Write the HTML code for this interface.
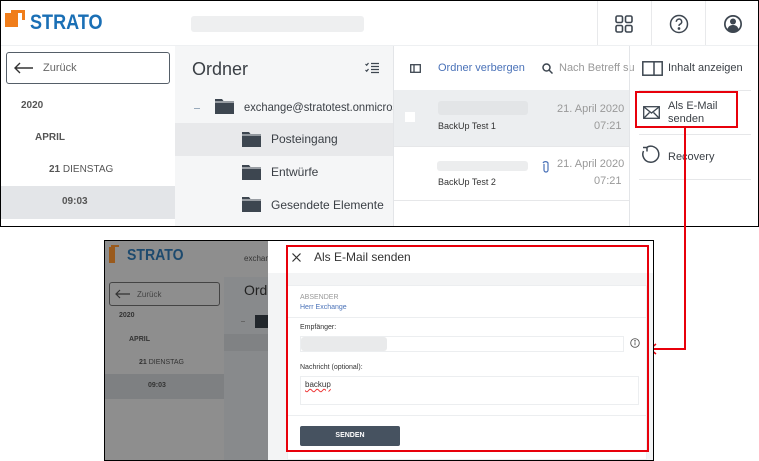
<!DOCTYPE html>
<html><head><meta charset="utf-8"><style>
*{box-sizing:border-box;margin:0;padding:0}
body{width:759px;height:461px;background:#fff;position:relative;overflow:hidden;font-family:"Liberation Sans",sans-serif;color:#333}
.a{position:absolute}
.t{position:absolute;white-space:nowrap}
.blur{position:absolute;background:#e6e7e9;border-radius:3px}
</style></head><body>
<!-- TOP SCREENSHOT -->
<div class="a" style="left:0;top:0;width:759px;height:227px;border:1px solid #000;overflow:hidden;background:#fff">
  <div class="a" style="left:4px;top:12px;width:13px;height:14px;background:#f07d1a"></div>
  <div class="a" style="left:10px;top:9px;width:14px;height:3px;background:#f07d1a"></div>
  <div class="a" style="left:21px;top:9px;width:3px;height:10px;background:#f07d1a"></div>
  <div class="t" style="left:29px;top:10px;font-size:21px;font-weight:bold;color:#1a6fb5;transform:scaleX(0.86);transform-origin:left">STRATO</div>
  <div class="blur" style="left:190px;top:15px;width:173px;height:16px;background:#eeeff0"></div>
  <div class="a" style="left:596px;top:0;width:1px;height:44px;background:#e8e9eb"></div>
  <div class="a" style="left:650px;top:0;width:1px;height:44px;background:#e8e9eb"></div>
  <div class="a" style="left:704px;top:0;width:1px;height:44px;background:#e8e9eb"></div>
  <div class="a" style="left:0;top:44px;width:759px;height:1px;background:#eef0f2"></div>
  <svg class="a" style="left:614px;top:14px" width="18" height="18" viewBox="0 0 18 18" fill="none" stroke="#3d4650" stroke-width="1.6"><rect x="1" y="1" width="6.5" height="6.5" rx="1.5"/><rect x="10.5" y="1" width="6.5" height="6.5" rx="1.5"/><rect x="1" y="10.5" width="6.5" height="6.5" rx="1.5"/><rect x="10.5" y="10.5" width="6.5" height="6.5" rx="1.5"/></svg>
  <svg class="a" style="left:668px;top:13px" width="20" height="20" viewBox="0 0 20 20" fill="none" stroke="#3d4650" stroke-width="1.5"><circle cx="10" cy="10" r="8.5"/><path d="M7.3 7.8a2.7 2.7 0 1 1 3.6 2.5c-.7.3-.9.8-.9 1.6"/><circle cx="10" cy="14.5" r=".6" fill="#3d4650"/></svg>
  <svg class="a" style="left:722px;top:13px" width="20" height="20" viewBox="0 0 20 20"><circle cx="10" cy="10" r="9" fill="#3d4650"/><circle cx="10" cy="10" r="7.3" fill="#fff"/><circle cx="10" cy="7.5" r="3" fill="#3d4650"/><path d="M4.5 15c1-3 3-4 5.5-4s4.5 1 5.5 4a7 7 0 0 1-11 0z" fill="#3d4650"/></svg>
  <div class="a" style="left:5px;top:51px;width:164px;height:32px;border:1.5px solid #555e68;border-radius:3px"></div>
  <svg class="a" style="left:13px;top:61px" width="20" height="12" viewBox="0 0 20 12" fill="none" stroke="#333" stroke-width="1.4"><path d="M19 6H1M6 1L1 6l5 5"/></svg>
  <div class="t" style="left:42px;top:61px;font-size:11px;color:#666">Zurück</div>
  <div class="t" style="left:20px;top:99px;font-size:10px;font-weight:bold;color:#555">2020</div>
  <div class="t" style="left:34px;top:131px;font-size:10px;font-weight:bold;color:#555">APRIL</div>
  <div class="t" style="left:48px;top:163px;font-size:10px;color:#555"><b>21</b> DIENSTAG</div>
  <div class="a" style="left:0;top:185px;width:174px;height:33px;background:#e3e5e8"></div>
  <div class="t" style="left:61px;top:195px;font-size:10px;font-weight:bold;color:#555">09:03</div>
  <div class="a" style="left:174px;top:45px;width:218px;height:182px;background:#f5f6f7"></div>
  <div class="t" style="left:191px;top:58px;font-size:18px;color:#3a3f45">Ordner</div>
  <svg class="a" style="left:364px;top:61px" width="15" height="12" viewBox="0 0 15 12" fill="none" stroke="#3d4650" stroke-width="1.2"><path d="M0.5 2l1.2 1.2L3.5 1M0.5 8l1.2 1.2L3.5 7M6 1.5h8M6 4.5h8M6 7.5h8M6 10.5h8"/></svg>
  <div class="a" style="left:193px;top:107px;width:6px;height:1px;background:#9ab"></div>
  <svg class="a" style="left:214px;top:97px" width="19" height="16" viewBox="0 0 19 16"><path d="M0 1h7l1.5 2H19v13H0z" fill="#3d4650"/><path d="M0 4h19" stroke="#f5f6f7" stroke-width="1"/></svg>
  <div class="t" style="left:243px;top:99px;font-size:12px;color:#3a3f45;transform:scaleX(0.93);transform-origin:left">exchange@stratotest.onmicrosoft</div>
  <div class="a" style="left:174px;top:122px;width:218px;height:33px;background:#e8e9eb"></div>
  <svg class="a" style="left:241px;top:130px" width="19" height="16" viewBox="0 0 19 16"><path d="M0 1h7l1.5 2H19v13H0z" fill="#3d4650"/><path d="M0 4h19" stroke="#e8e9eb"/></svg>
  <div class="t" style="left:270px;top:131px;font-size:12px;color:#3a3f45">Posteingang</div>
  <svg class="a" style="left:241px;top:163px" width="19" height="16" viewBox="0 0 19 16"><path d="M0 1h7l1.5 2H19v13H0z" fill="#3d4650"/><path d="M0 4h19" stroke="#f5f6f7"/></svg>
  <div class="t" style="left:270px;top:164px;font-size:12px;color:#3a3f45">Entwürfe</div>
  <svg class="a" style="left:241px;top:195px" width="19" height="16" viewBox="0 0 19 16"><path d="M0 1h7l1.5 2H19v13H0z" fill="#3d4650"/><path d="M0 4h19" stroke="#f5f6f7"/></svg>
  <div class="t" style="left:270px;top:197px;font-size:12px;color:#3a3f45">Gesendete Elemente</div>
  <div class="a" style="left:392px;top:45px;width:1px;height:182px;background:#e3e5e8"></div>
  <svg class="a" style="left:409px;top:63px" width="11" height="9" viewBox="0 0 11 9" fill="none" stroke="#3d4650" stroke-width="1.3"><rect x="0.7" y="0.7" width="9.6" height="7.6"/><path d="M4 1v7"/></svg>
  <div class="t" style="left:437px;top:61px;font-size:11px;color:#4a72b8">Ordner verbergen</div>
  <svg class="a" style="left:541px;top:62px" width="11" height="11" viewBox="0 0 11 11" fill="none" stroke="#3d4650" stroke-width="1.5"><circle cx="4.5" cy="4.5" r="3.5"/><path d="M7 7l3.5 3.5"/></svg>
  <div class="t" style="left:558px;top:61px;font-size:11px;color:#999">Nach Betreff su</div>
  <div class="a" style="left:393px;top:89px;width:235px;height:56px;background:#eceef0"></div>
  <div class="a" style="left:404px;top:111px;width:10px;height:10px;background:#fff"></div>
  <div class="blur" style="left:437px;top:100px;width:90px;height:14px;background:#e3e5e7"></div>
  <div class="t" style="left:437px;top:120px;font-size:9px;color:#333">BackUp Test 1</div>
  <div class="t" style="left:556px;top:102px;font-size:11px;color:#999">21. April 2020</div>
  <div class="t" style="left:593px;top:119px;font-size:11px;color:#999">07:21</div>
  <div class="a" style="left:393px;top:145px;width:235px;height:1px;background:#e6e7e9"></div>
  <div class="blur" style="left:436px;top:160px;width:91px;height:10px;background:#ecedee"></div>
  <svg class="a" style="left:541px;top:159px" width="8" height="13" viewBox="0 0 8 13" fill="none" stroke="#4a72b8" stroke-width="1.2"><path d="M2 4v6a2 2 0 0 0 4 0V3a3 3 0 0 0-5 0"/></svg>
  <div class="t" style="left:556px;top:157px;font-size:11px;color:#999">21. April 2020</div>
  <div class="t" style="left:593px;top:174px;font-size:11px;color:#999">07:21</div>
  <div class="t" style="left:437px;top:176px;font-size:9px;color:#333">BackUp Test 2</div>
  <div class="a" style="left:393px;top:199px;width:235px;height:1px;background:#e6e7e9"></div>
  <div class="a" style="left:628px;top:45px;width:1px;height:182px;background:#e3e5e8"></div>
  <svg class="a" style="left:641px;top:60px" width="21" height="15" viewBox="0 0 21 15" fill="none" stroke="#3d4650" stroke-width="1.5"><rect x="0.8" y="0.8" width="19.4" height="13.4"/><path d="M12 1v13"/></svg>
  <div class="t" style="left:667px;top:61px;font-size:11px;color:#3a3f45">Inhalt anzeigen</div>
  <div class="a" style="left:638px;top:89px;width:112px;height:1px;background:#e6e7e9"></div>
  <svg class="a" style="left:642px;top:105px" width="17" height="13" viewBox="0 0 17 13" fill="none" stroke="#3d4650" stroke-width="1.3"><rect x="0.7" y="0.7" width="15.6" height="11.6"/><path d="M1 1l7.5 6L16 1M1 12l5.5-5.5M16 12l-5.5-5.5"/></svg>
  <div class="t" style="left:667px;top:99px;font-size:11px;line-height:13px;color:#3a3f45">Als E-Mail<br>senden</div>
  <div class="a" style="left:634px;top:90px;width:103px;height:37px;border:2px solid #e8000b"></div>
  <div class="a" style="left:638px;top:133px;width:112px;height:1px;background:#e6e7e9"></div>
  <svg class="a" style="left:640px;top:143px" width="20" height="20" viewBox="0 0 20 20" fill="none" stroke="#3d4650" stroke-width="1.5"><path d="M6 3.2A8 8 0 1 1 2.5 7"/><path d="M2 3.5l4 0v4" /></svg>
  <div class="t" style="left:667px;top:150px;font-size:11px;color:#3a3f45">Recovery</div>
  <div class="a" style="left:638px;top:178px;width:112px;height:1px;background:#e6e7e9"></div>
</div>
<div class="a" style="left:684px;top:126px;width:2px;height:224px;background:#e8000b"></div>
<div class="a" style="left:651px;top:348px;width:35px;height:2px;background:#e8000b"></div>
<svg class="a" style="left:648px;top:343px" width="10" height="12" viewBox="0 0 10 12" fill="none" stroke="#e8000b" stroke-width="1.5"><path d="M8 1L2 6l6 5"/></svg>
<div class="a" style="left:104px;top:240px;width:550px;height:221px;border:1px solid #000;overflow:hidden;background:#8e8e8e">
  <div class="a" style="left:4px;top:6px;width:6px;height:16px;background:#9a5a1c"></div>
  <div class="a" style="left:6px;top:4px;width:8px;height:2px;background:#9a5a1c"></div>
  <div class="t" style="left:22px;top:6px;font-size:16px;font-weight:bold;color:#1d4a6e;transform:scaleX(0.88);transform-origin:left">STRATO</div>
  <div class="t" style="left:139px;top:13px;font-size:8px;color:#333">exchange@</div>
  <div class="a" style="left:119px;top:36px;width:144px;height:190px;background:#888a8c"></div>
  <div class="a" style="left:4px;top:41px;width:111px;height:24px;border:1.5px solid #444;border-radius:3px"></div>
  <svg class="a" style="left:10px;top:48px" width="16" height="10" viewBox="0 0 16 10" fill="none" stroke="#333" stroke-width="1.2"><path d="M15 5H1M5 1L1 5l4 4"/></svg>
  <div class="t" style="left:32px;top:49px;font-size:8px;color:#444">Zurück</div>
  <div class="t" style="left:14px;top:71px;font-size:7px;font-weight:bold;color:#333">2020</div>
  <div class="t" style="left:24px;top:95px;font-size:7px;font-weight:bold;color:#333">APRIL</div>
  <div class="t" style="left:34px;top:118px;font-size:7px;color:#333"><b>21</b> DIENSTAG</div>
  <div class="a" style="left:0;top:133px;width:119px;height:25px;background:#7e8082"></div>
  <div class="t" style="left:43px;top:141px;font-size:7px;font-weight:bold;color:#333">09:03</div>
  <div class="t" style="left:139px;top:41px;font-size:14px;color:#222">Ordner</div>
  <div class="a" style="left:136px;top:80px;width:4px;height:1px;background:#666"></div>
  <div class="a" style="left:150px;top:74px;width:14px;height:13px;background:#22272c"></div>
  <div class="a" style="left:119px;top:93px;width:144px;height:17px;background:#808284"></div>
  <div class="a" style="left:163px;top:0;width:386px;height:221px;background:#fff"></div>
  <div class="a" style="left:163px;top:32px;width:386px;height:189px;background:#f3f4f5"></div>
  <div class="a" style="left:182px;top:44px;width:360px;height:175px;background:#fff;border:1px solid #eceef0"></div>
  <svg class="a" style="left:187px;top:12px" width="9" height="9" viewBox="0 0 9 9" stroke="#333" stroke-width="1.2"><path d="M0.5 0.5l8 8M8.5 0.5l-8 8"/></svg>
  <div class="t" style="left:209px;top:9px;font-size:12px;color:#333">Als E-Mail senden</div>
  <div class="t" style="left:195px;top:53px;font-size:7px;color:#999">ABSENDER</div>
  <div class="t" style="left:195px;top:63px;font-size:7px;color:#4a72b8">Herr Exchange</div>
  <div class="a" style="left:182px;top:76px;width:360px;height:1px;background:#eceef0"></div>
  <div class="t" style="left:195px;top:83px;font-size:7px;color:#333">Empfänger:</div>
  <div class="a" style="left:195px;top:95px;width:324px;height:16px;border:1px solid #eceef0"></div>
  <div class="blur" style="left:196px;top:96px;width:86px;height:14px;background:#e9eaeb"></div>
  <svg class="a" style="left:525px;top:97px" width="10" height="10" viewBox="0 0 10 10" fill="none" stroke="#555" stroke-width="0.9"><circle cx="5" cy="5" r="4.3"/><path d="M5 4.3v3"/><circle cx="5" cy="2.8" r=".4" fill="#555"/></svg>
  <div class="t" style="left:195px;top:123px;font-size:7px;color:#333">Nachricht (optional):</div>
  <div class="a" style="left:195px;top:135px;width:339px;height:29px;border:1px solid #eceef0"></div>
  <div class="t" style="left:200px;top:139px;font-size:8px;color:#333;text-decoration:underline wavy #e33;text-decoration-thickness:1px">backup</div>
  <div class="a" style="left:182px;top:174px;width:360px;height:1px;background:#eceef0"></div>
  <div class="a" style="left:195px;top:185px;width:100px;height:20px;background:#465260;border-radius:2px"></div>
  <div class="t" style="left:195px;top:191px;width:100px;text-align:center;font-size:7px;font-weight:bold;color:#fff">SENDEN</div>
  <div class="a" style="left:181px;top:4px;width:363px;height:207px;border:2px solid #e8000b"></div>
</div>
</body></html>
